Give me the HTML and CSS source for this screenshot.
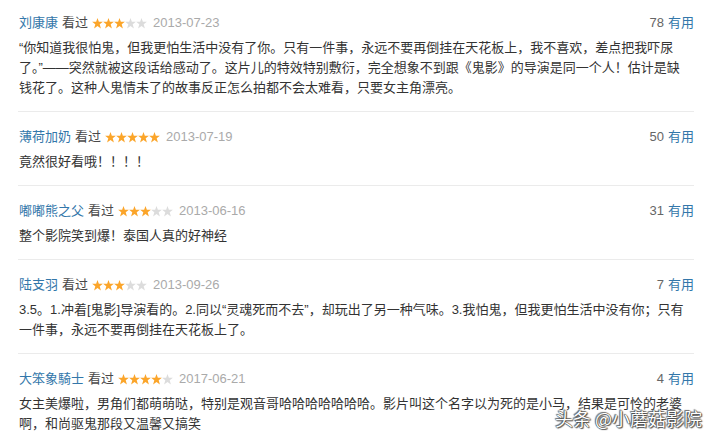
FILE: index.html
```html
<!DOCTYPE html>
<html lang="zh-CN">
<head>
<meta charset="utf-8">
<title>短评</title>
<link rel="stylesheet" href="styles.css">
</head>
<body>
<svg width="0" height="0" class="defs" aria-hidden="true">
  <defs>
    <symbol id="star" viewBox="0 0 11 11">
      <polygon points="5.5,0 6.85,3.65 10.9,3.8 7.7,6.3 8.9,10.4 5.5,8.0 2.1,10.4 3.3,6.3 0.1,3.8 4.15,3.65"/>
    </symbol>
  </defs>
</svg>
<div class="list">
  <div class="item">
    <div class="head">
      <div class="info">
        <a class="name">刘康康</a><span class="seen">看过</span>
        <span class="stars">
          <svg class="on"><use href="#star"/></svg><svg class="on"><use href="#star"/></svg><svg class="on"><use href="#star"/></svg><svg class="off"><use href="#star"/></svg><svg class="off"><use href="#star"/></svg>
        </span>
        <span class="date">2013-07-23</span>
      </div>
      <div class="votes"><span class="num">78</span><a class="useful">有用</a></div>
    </div>
    <p class="text">“你知道我很怕鬼，但我更怕生活中没有了你。只有一件事，永远不要再倒挂在天花板上，我不喜欢，差点把我吓尿了。”——突然就被这段话给感动了。这片儿的特效特别敷衍，完全想象不到跟《鬼影》的导演是同一个人！估计是缺钱花了。这种人鬼情未了的故事反正怎么拍都不会太难看，只要女主角漂亮。</p>
  </div>
  <div class="item">
    <div class="head">
      <div class="info">
        <a class="name">薄荷加奶</a><span class="seen">看过</span>
        <span class="stars">
          <svg class="on"><use href="#star"/></svg><svg class="on"><use href="#star"/></svg><svg class="on"><use href="#star"/></svg><svg class="on"><use href="#star"/></svg><svg class="on"><use href="#star"/></svg>
        </span>
        <span class="date">2013-07-19</span>
      </div>
      <div class="votes"><span class="num">50</span><a class="useful">有用</a></div>
    </div>
    <p class="text">竟然很好看哦！！！！</p>
  </div>
  <div class="item">
    <div class="head">
      <div class="info">
        <a class="name">嘟嘟熊之父</a><span class="seen">看过</span>
        <span class="stars">
          <svg class="on"><use href="#star"/></svg><svg class="on"><use href="#star"/></svg><svg class="on"><use href="#star"/></svg><svg class="off"><use href="#star"/></svg><svg class="off"><use href="#star"/></svg>
        </span>
        <span class="date">2013-06-16</span>
      </div>
      <div class="votes"><span class="num">31</span><a class="useful">有用</a></div>
    </div>
    <p class="text">整个影院笑到爆！泰国人真的好神经</p>
  </div>
  <div class="item">
    <div class="head">
      <div class="info">
        <a class="name">陆支羽</a><span class="seen">看过</span>
        <span class="stars">
          <svg class="on"><use href="#star"/></svg><svg class="on"><use href="#star"/></svg><svg class="on"><use href="#star"/></svg><svg class="off"><use href="#star"/></svg><svg class="off"><use href="#star"/></svg>
        </span>
        <span class="date">2013-09-26</span>
      </div>
      <div class="votes"><span class="num">7</span><a class="useful">有用</a></div>
    </div>
    <p class="text">3.5。1.冲着[鬼影]导演看的。2.同以“灵魂死而不去”，却玩出了另一种气味。3.我怕鬼，但我更怕生活中没有你；只有一件事，永远不要再倒挂在天花板上了。</p>
  </div>
  <div class="item">
    <div class="head">
      <div class="info">
        <a class="name">大笨象騎士</a><span class="seen">看过</span>
        <span class="stars">
          <svg class="on"><use href="#star"/></svg><svg class="on"><use href="#star"/></svg><svg class="on"><use href="#star"/></svg><svg class="on"><use href="#star"/></svg><svg class="off"><use href="#star"/></svg>
        </span>
        <span class="date">2017-06-21</span>
      </div>
      <div class="votes"><span class="num">4</span><a class="useful">有用</a></div>
    </div>
    <p class="text">女主美爆啦，男角们都萌萌哒，特别是观音哥哈哈哈哈哈哈哈。影片叫这个名字以为死的是小马，结果是可怜的老婆啊，和尚驱鬼那段又温馨又搞笑</p>
  </div>
</div>
<div class="watermark">头条 @小蘑菇影院</div>
</body>
</html>
```
FILE: styles.css
```css
* { box-sizing: border-box; }
html, body {
  margin: 0;
  padding: 0;
  background: #fff;
  height: 100%;
  overflow: hidden;
}
body {
  font-family: "Liberation Sans", "Noto Sans CJK SC", sans-serif;
  font-size: 13px;
  color: #333;
  position: relative;
}
.defs { position: absolute; }
.list {
  margin-left: 18px;
  width: 676px;
}
.item {
  padding: 15px 0 13px 1px;
  border-top: 1px solid #ebebeb;
}
.item:first-child {
  padding-top: 13px;
  border-top: none;
}
.head {
  display: flex;
  justify-content: space-between;
  align-items: center;
  height: 20px;
  line-height: 20px;
}
.info {
  display: flex;
  align-items: center;
}
.name {
  color: #3377aa;
}
.seen {
  color: #494949;
  margin-left: 4px;
}
.stars {
  display: flex;
  margin-left: 4px;
  margin-right: 6px;
}
.stars svg {
  width: 11px;
  height: 11px;
  display: block;
}
.stars .on { fill: #fba52a; }
.stars .off { fill: #dcdcdc; }
.date {
  color: #aaa;
  font-size: 13px;
}
.votes {
  color: #666;
}
.num { margin-right: 4px; }
.useful { color: #3377aa; }
.text {
  margin: 5px 4px 0 0;
  line-height: 20px;
  color: #333;
}
.watermark {
  position: absolute;
  left: 555px;
  top: 408px;
  font-family: "Noto Sans CJK SC", sans-serif;
  font-size: 18px;
  line-height: 20px;
  color: #fff;
  text-shadow: 0 0 1px #333, 0 0 1px #333, 1px 1px 1px #555, -1px -1px 1px #777;
  white-space: nowrap;
}
```
